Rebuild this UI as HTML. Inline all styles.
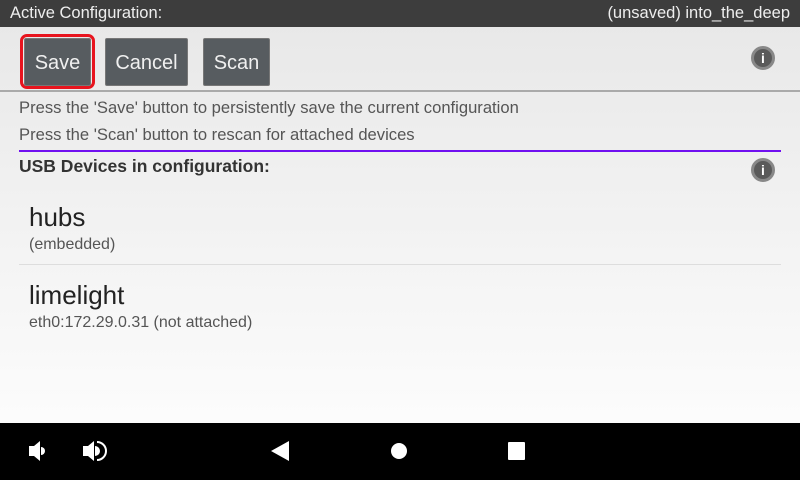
<!DOCTYPE html>
<html><head><style>
*{margin:0;padding:0;box-sizing:border-box}
body{width:800px;height:480px;overflow:hidden;font-family:"Liberation Sans",Roboto,sans-serif;background:linear-gradient(#e7e7e7,#fafafa 380px,#fff);position:relative}
.abs{position:absolute}
.top{left:0;top:0;width:800px;height:27px;background:#3d3d3d;color:#eee;font-size:16.5px;line-height:27px}
.btn{position:absolute;top:38px;height:48px;background:#575c60;color:#f0f0f0;font-size:20px;line-height:48px;text-align:center;border:1px solid #777;border-radius:2px}
.info{position:absolute;width:24px;height:24px;border-radius:50%;background:#5a5a5a;border:3px solid #888;color:#fff;font-size:14px;font-weight:bold;text-align:center;line-height:18px}
.t{position:absolute;color:#555;font-size:16.6px;white-space:nowrap}
.nav{left:0;top:423px;width:800px;height:57px;background:#000}
</style></head><body>
<div class="abs top"><span style="position:absolute;left:10px">Active Configuration:</span><span style="position:absolute;right:10px">(unsaved) into_the_deep</span></div>
<div class="abs" style="left:20px;top:34px;width:75px;height:55px;border:3px solid #e8141e;border-radius:7px"></div>
<div class="btn" style="left:24px;width:67px">Save</div>
<div class="btn" style="left:105px;width:83px">Cancel</div>
<div class="btn" style="left:203px;width:67px">Scan</div>
<div class="info" style="left:751px;top:46px">i</div>
<div class="abs" style="left:0;top:90px;width:800px;height:2px;background:#aaa"></div>
<div class="t" style="left:19px;top:98px">Press the 'Save' button to persistently save the current configuration</div>
<div class="t" style="left:19px;top:125px">Press the 'Scan' button to rescan for attached devices</div>
<div class="abs" style="left:19px;top:150px;width:762px;height:2px;background:#7010f0"></div>
<div class="t" style="left:19px;top:156px;font-weight:bold;font-size:17.5px;color:#333">USB Devices in configuration:</div>
<div class="info" style="left:751px;top:158px">i</div>
<div class="t" style="left:29px;top:202px;font-size:26px;color:#222">hubs</div>
<div class="t" style="left:29px;top:236px;font-size:16px;color:#555">(embedded)</div>
<div class="abs" style="left:19px;top:264px;width:762px;height:1px;background:#ddd"></div>
<div class="t" style="left:29px;top:280px;font-size:26px;color:#222">limelight</div>
<div class="t" style="left:29px;top:314px;font-size:16px;color:#555">eth0:172.29.0.31 (not attached)</div>
<div class="abs nav">
<svg width="800" height="57" style="position:absolute;left:0;top:0">
<path d="M29 23h5l6-5v20l-6-5h-5z" fill="#fff"/><path d="M41 24a4 4 0 0 1 0 8z" fill="#fff"/>
<path d="M83 23h5l6-5v20l-6-5h-5z" fill="#fff"/><path d="M95 23a5 5 0 0 1 0 10z" fill="#fff"/><path d="M97 19a9 9 0 0 1 0 18" fill="none" stroke="#fff" stroke-width="2"/>
<path d="M271 28l18-10v20z" fill="#fff"/>
<circle cx="399" cy="28" r="8" fill="#fff"/>
<rect x="508" y="19" width="17" height="18" rx="1" fill="#fff"/>
</svg></div>
</body></html>
